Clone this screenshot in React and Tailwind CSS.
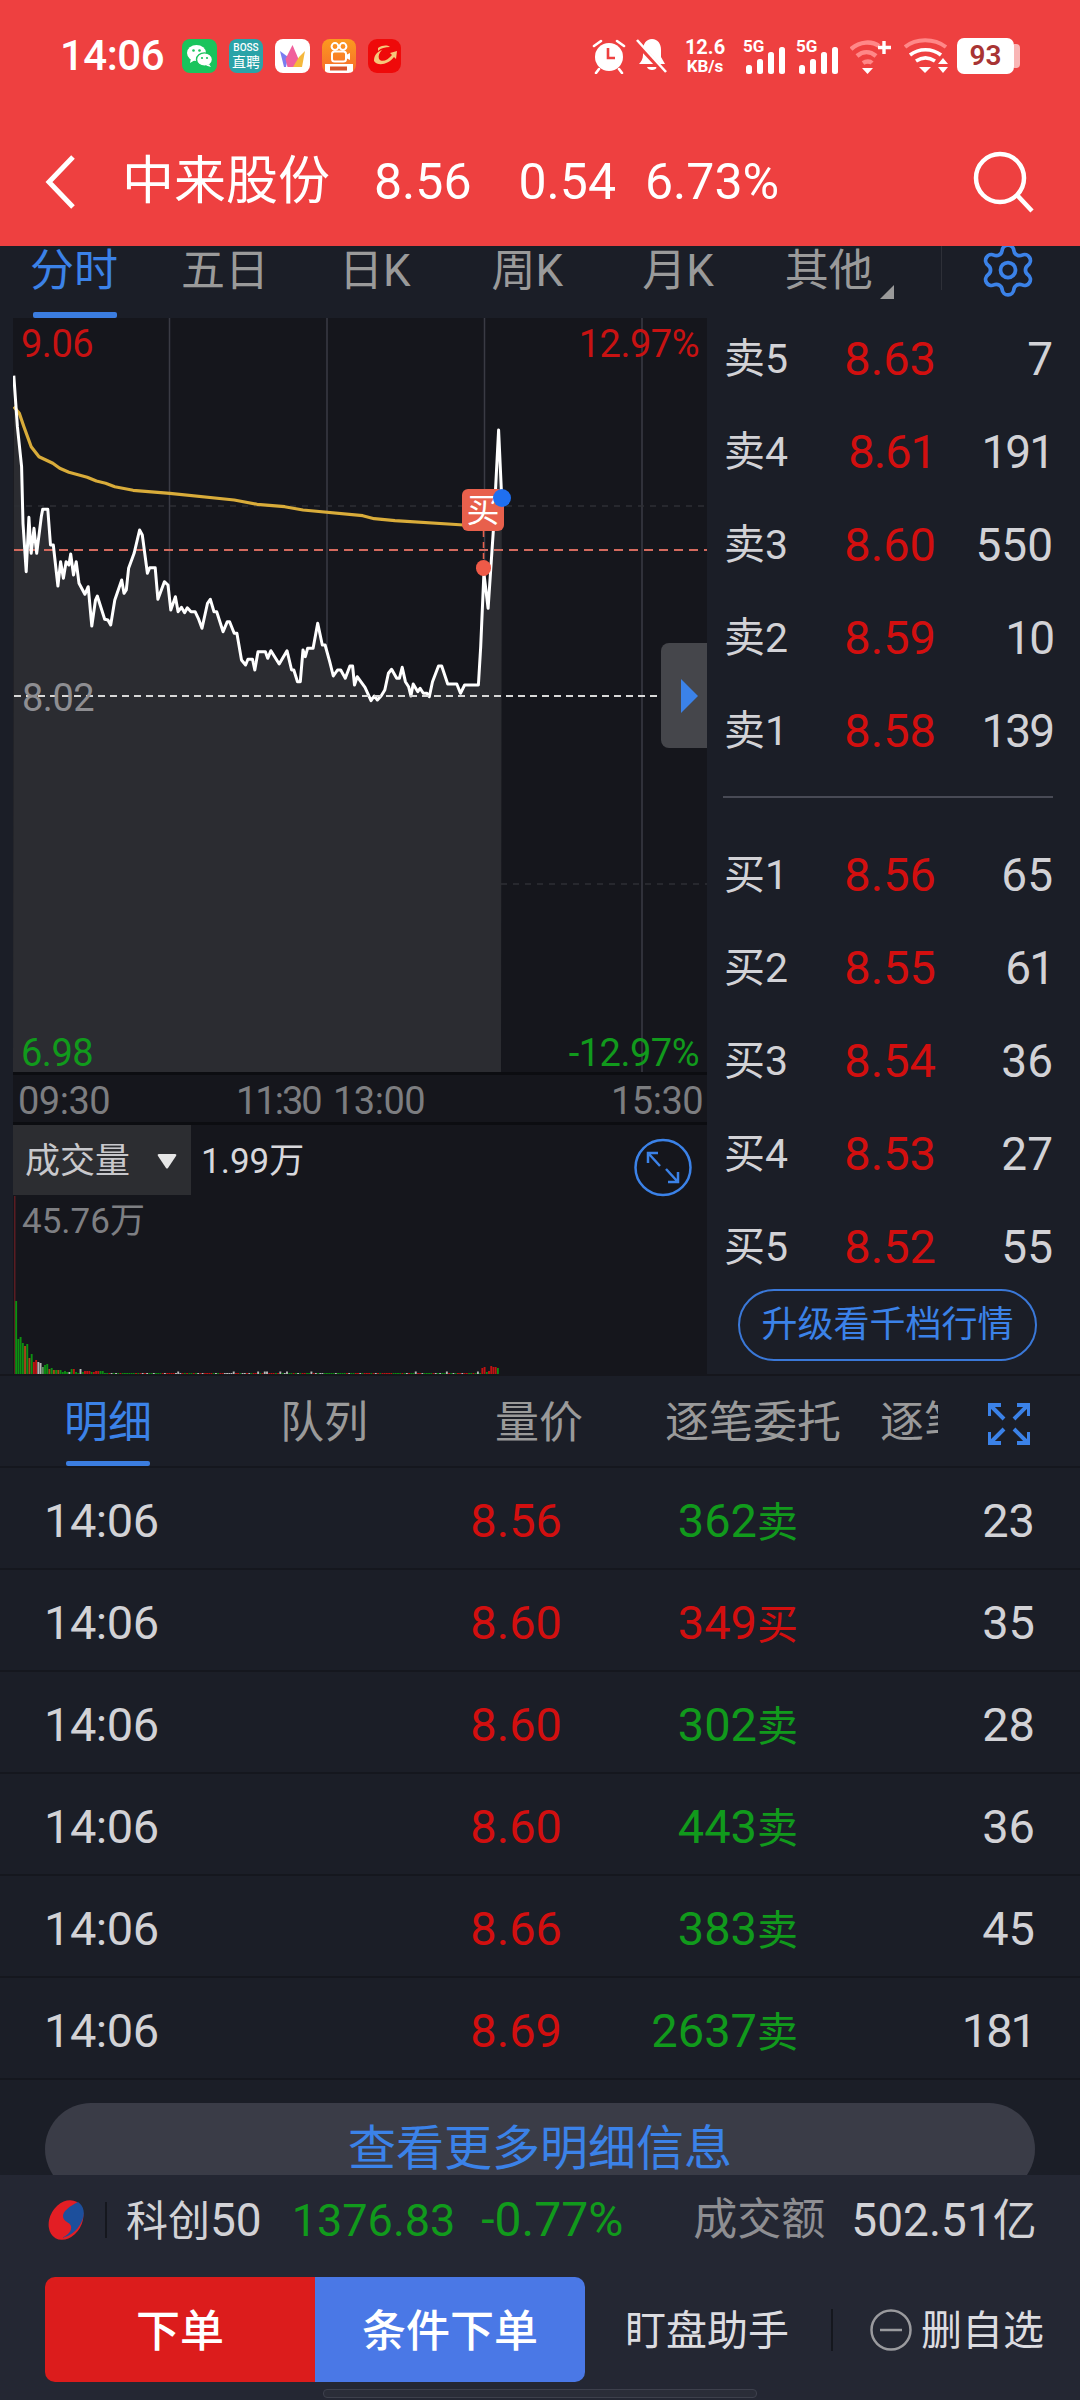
import React from "react";
import { Settings } from "lucide-react";

const PRICE = [[30,197],[38,350],[47,470],[50,640],[57,785],[63,622],[68,730],[74,655],[80,730],[90,620],[93,598],[104,598],[110,705],[116,705],[126,828],[132,755],[138,805],[144,755],[150,765],[154,732],[160,795],[166,755],[172,820],[185,853],[192,830],[200,948],[208,870],[212,858],[228,928],[235,930],[241,945],[250,870],[265,810],[270,850],[275,840],[280,775],[292,730],[304,660],[310,675],[321,790],[326,773],[338,773],[344,868],[358,815],[366,825],[372,900],[382,860],[388,905],[395,892],[402,908],[408,893],[416,905],[425,905],[432,925],[440,955],[452,880],[458,868],[466,905],[472,905],[486,965],[495,935],[500,935],[510,970],[516,970],[526,1050],[535,1065],[540,1048],[550,1048],[555,1080],[562,1025],[578,1025],[583,1045],[590,1022],[608,1062],[625,1022],[635,1080],[640,1080],[648,1115],[654,1115],[660,1020],[665,1040],[670,1015],[682,1015],[692,940],[702,1005],[708,1005],[718,1055],[726,1098],[735,1080],[742,1080],[752,1105],[762,1068],[768,1068],[772,1125],[778,1100],[795,1132],[808,1172],[815,1158],[822,1170],[830,1158],[838,1140],[846,1090],[853,1078],[864,1105],[870,1105],[876,1072],[883,1115],[890,1130],[895,1158],[900,1122],[910,1145],[915,1135],[922,1150],[930,1150],[935,1160],[942,1115],[955,1068],[962,1068],[975,1122],[995,1122],[1003,1150],[1012,1125],[1042,1125],[1047,1010],[1054,790],[1063,895],[1075,650],[1086,360],[1093,570]];
const AVERAGE = [[30,290],[42,310],[52,350],[68,410],[85,440],[115,460],[130,475],[150,487],[190,502],[210,513],[230,520],[250,530],[290,541],[370,550],[510,570],[560,583],[620,590],[660,600],[790,617],[815,626],[860,632],[1010,645]];

// Series are stored at 2.178 units per pixel across and 3 per pixel down.
const toPoints = (series) =>
  series.map(([x, y]) => `${(x / 2.178).toFixed(1)},${(310 + y / 3).toFixed(1)}`).join(" ");

const GREEN = "#0d8f12";
const RED = "#c01212";
const BROWN = "#a8461a";
const PALE = "#b8b8b8";
const SAGE = "#5f9a5f";
const EARLY_BARS = [
  [73,GREEN],[35,GREEN],[37,GREEN],[31,GREEN],[28,BROWN],[30,GREEN],[16,BROWN],[20,GREEN],[12,RED],[14,RED],[12,PALE],[11,PALE],[7,SAGE],[9,GREEN],[10,GREEN],[5,BROWN],[6,GREEN],[4,BROWN],[4,GREEN],[4,BROWN],[4,GREEN],[2,GREEN],[3,GREEN],[2,GREEN],[2,PALE],[5,GREEN],[5,RED],[2,GREEN],[1,GREEN],[5,PALE],[2,GREEN],[3,RED],[3,RED],[3,RED],[2,GREEN],[2,RED],[3,RED],[3,RED],[3,GREEN],[3,GREEN],
];
const LATE_BARS = [[6,RED],[7,RED],[2,GREEN],[3,RED],[8,RED],[7,RED],[7,RED],[6,GREEN]];
const barAt = (i) => {
  const n = Math.abs(Math.sin(i * 12.9898) * 43758.5453) % 1;
  const colour = n < 0.45 ? GREEN : n < 0.75 ? RED : PALE;
  return [n > 0.93 ? 2.5 : 1, colour];
};
const VOLUME = (() => {
  const total = 218;
  const list = [];
  for (let i = 0; i < total; i++) {
    if (i < EARLY_BARS.length) list.push(EARLY_BARS[i]);
    else if (i >= total - LATE_BARS.length) list.push(LATE_BARS[i - (total - LATE_BARS.length)]);
    else list.push(barAt(i));
  }
  return list;
})();

const ASKS = [["卖5","8.63","7"],["卖4","8.61","191"],["卖3","8.60","550"],["卖2","8.59","10"],["卖1","8.58","139"]];
const BIDS = [["买1","8.56","65"],["买2","8.55","61"],["买3","8.54","36"],["买4","8.53","27"],["买5","8.52","55"]];
const TRADES = [
  ["8.56","362","卖","23"],["8.60","349","买","35"],["8.60","302","卖","28"],
  ["8.60","443","卖","36"],["8.66","383","卖","45"],["8.69","2637","卖","181"],
];

function WeChat() {
  return (
    <div className="flex h-[34px] w-[35px] items-center justify-center rounded-[8px] bg-[#19c45c]">
      <svg viewBox="0 0 35 34" className="h-[34px] w-[35px]">
        <ellipse cx="14.5" cy="14" rx="9.5" ry="8" fill="#fff" />
        <path d="M9 19l-1 5 5-3z" fill="#fff" />
        <ellipse cx="22.5" cy="20.5" rx="8" ry="6.6" fill="#fff" stroke="#19c45c" strokeWidth="1.4" />
        <path d="M27 25l2 3-5-1.5z" fill="#fff" />
        <circle cx="11.5" cy="11.5" r="1.3" fill="#19c45c" />
        <circle cx="17.5" cy="11.5" r="1.3" fill="#19c45c" />
        <circle cx="20" cy="19" r="1.1" fill="#19c45c" />
        <circle cx="25" cy="19" r="1.1" fill="#19c45c" />
      </svg>
    </div>
  );
}

function BossApp() {
  return (
    <div className="flex h-[34px] w-[34px] flex-col items-center justify-center rounded-[8px] bg-[#2ba3a8] text-white">
      <span className="text-[10px] leading-[12px] font-medium">BOSS</span>
      <span className="text-[14px] leading-[16px]">直聘</span>
    </div>
  );
}

function Crown() {
  return (
    <div className="h-[34px] w-[35px] rounded-[8px] bg-white">
      <svg viewBox="0 0 35 34" className="h-[34px] w-[35px]">
        <path d="M5 12l8 6-2 10H9z" fill="#7b7cf0" />
        <path d="M17.5 6l6 14-3 8h-8l-2-8z" fill="#f0609c" />
        <path d="M30 12l-3 16h-9l6-10z" fill="#f5b83c" />
      </svg>
    </div>
  );
}

function Kuaishou() {
  return (
    <div className="relative h-[34px] w-[34px] overflow-hidden rounded-[8px] bg-gradient-to-b from-[#fb9a1e] to-[#f76b2a]">
      <svg viewBox="0 0 34 34" className="h-[34px] w-[34px]">
        <circle cx="13" cy="7.5" r="3.4" fill="none" stroke="#fff" strokeWidth="2" />
        <circle cx="21" cy="7.5" r="3.4" fill="none" stroke="#fff" strokeWidth="2" />
        <rect x="10" y="12.5" width="14" height="10" rx="2.5" fill="none" stroke="#fff" strokeWidth="2" />
        <path d="M24 16l4-2v7l-4-2z" fill="#fff" />
        <rect x="3" y="25" width="28" height="9" fill="#fff" />
        <rect x="8" y="27.5" width="17" height="4" fill="#d9542b" />
      </svg>
    </div>
  );
}

function SwirlApp() {
  return (
    <div className="h-[34px] w-[33px] rounded-[9px] bg-[#ef0a0a]">
      <svg viewBox="0 0 33 34" className="h-[34px] w-[33px]">
        <path d="M10 9c5-3 9-3 12-1-5 0-9 1-12 4zM6 22c0-6 3-9 8-11-3 3-4 6-3 9 3 4 9 1 13-4l-2-2 7-2-1 8-2-2c-5 7-16 10-20 4z" fill="#f6c87a" />
      </svg>
    </div>
  );
}

function Alarm() {
  return (
    <svg viewBox="0 0 36 36" className="h-[36px] w-[36px]">
      <circle cx="18" cy="19" r="14" fill="#fff" />
      <path d="M3 8l7-5M33 8l-7-5M8 31l-3 4M28 31l3 4" stroke="#fff" strokeWidth="2.6" strokeLinecap="round" />
      <path d="M17 10v10h7" fill="none" stroke="#ee4040" strokeWidth="2.6" />
    </svg>
  );
}

function BellOff() {
  return (
    <svg viewBox="0 0 32 36" className="h-[36px] w-[32px]">
      <path d="M16 1c6 0 9 5 9 11v7l4 7H3c2-2 4-5 4-9v-5C7 6 10 1 16 1z" fill="#fff" />
      <path d="M11 29c1 4 9 4 10 0z" fill="#fff" />
      <path d="M-1 3l30 32" stroke="#ee4040" strokeWidth="5" />
      <path d="M1 2l29 32" stroke="#fff" strokeWidth="2.6" />
    </svg>
  );
}

function Signal() {
  return (
    <div className="relative h-[36px] w-[43px]">
      <span className="absolute top-0 left-0 text-[17px] leading-[16px] font-bold">5G</span>
      <svg viewBox="0 0 43 36" className="h-[36px] w-[43px]">
        <rect x="3" y="27" width="6" height="9" rx="2.5" fill="#fff" />
        <rect x="14" y="21" width="6" height="15" rx="2.5" fill="#fff" />
        <rect x="25" y="14" width="6" height="22" rx="2.5" fill="#fff" />
        <rect x="36" y="9" width="6" height="27" rx="2.5" fill="#fff" />
      </svg>
    </div>
  );
}

function WifiPlus() {
  return (
    <svg viewBox="0 0 42 36" fill="none" className="h-[36px] w-[42px]">
      <path d="M1 11c9-8 21-8 28-3" stroke="#f88" strokeWidth="4.5" />
      <path d="M7 18c6-5 13-5 19 0" stroke="#f88" strokeWidth="4.5" />
      <path d="M13 25c3-2 7-2 9 0" stroke="#f88" strokeWidth="4.5" />
      <path d="M12 30h11l-5.500 6z" fill="#fff" />
      <path d="M34 3v13M28 9.500h13" stroke="#fff" strokeWidth="3.4" />
    </svg>
  );
}

function WifiDual() {
  return (
    <svg viewBox="0 0 44 36" fill="none" className="h-[36px] w-[44px]">
      <path d="M1 9c11-9 29-9 41 0" stroke="#f88" strokeWidth="4" />
      <path d="M6 17c9-7 22-7 31 0" stroke="#fff" strokeWidth="3.600" />
      <path d="M12 23c6-4 13-4 19 0" stroke="#fff" strokeWidth="3.600" />
      <path d="M15 29h12l-6 6z" fill="#fff" />
      <path d="M34 26h10l-5-6zM34 29h10l-5 6z" fill="#fff" />
    </svg>
  );
}

function Battery() {
  return (
    <div className="flex h-[36px] w-[63px] items-center">
      <div className="flex h-[36px] w-[57px] items-center justify-center rounded-[7px] bg-white text-[28px] leading-none font-semibold text-[#a83434]">
        93
      </div>
      <div className="h-[24px] w-[6px] rounded-r-[4px] bg-[#f9b5b5]" />
    </div>
  );
}

function CornerArrows() {
  return (
    <svg viewBox="0 0 42 42" fill="none" stroke="#3b82e8" strokeWidth="4" className="h-[42px] w-[42px]">
      <path d="M1 13V2h12M2 2l14 14" />
      <path d="M41 13V2H29M40 2L26 16" />
      <path d="M1 29v11h12M2 40l14-14" />
      <path d="M41 29v11H29M40 40L26 26" />
    </svg>
  );
}

// The digit 1 sits tighter than the rest in these figures.
const qtyClass = (text) => (text.includes("1") ? "tracking-[-2px]" : "");

function BookRow({ label, price, qty }) {
  return (
    <div className="grid h-[93px] grid-cols-[100px_112px_117px] items-center pl-[17px]">
      <span className="text-[41px] text-[#d2d2d6]">{label}</span>
      <span className={`text-right text-[47px] text-[#d20f0f] ${price.includes("1") ? "tracking-[-1px]" : ""}`}>{price}</span>
      <span className={`text-right text-[46px] text-[#d2d2d6] ${qtyClass(qty)}`}>{qty}</span>
    </div>
  );
}

function ChartPanel() {
  const area = `13,1072 ${toPoints(PRICE)} 501,1072`;
  return (
    <div className="relative h-[754px] w-full bg-[#15161c]">
      <svg viewBox="13 318 694 754" fill="none" className="h-[754px] w-[694px]">
        {[169.5, 327, 484.5, 642].map((x) => (
          <line key={x} x1={x} x2={x} y1="318" y2="1072" stroke="#3a3b44" strokeWidth="1.500" />
        ))}
        <polygon points={area} fill="#2b2c31" />
        <line x1="14" x2="707" y1="506" y2="506" stroke="#2e2f35" strokeWidth="1.500" strokeDasharray="6 6" />
        <line x1="501" x2="707" y1="884" y2="884" stroke="#2e2f35" strokeWidth="1.500" strokeDasharray="6 6" />
        <line x1="14" x2="707" y1="550" y2="550" stroke="#d46a5e" strokeWidth="1.800" strokeDasharray="9 6" />
        <polyline points={toPoints(AVERAGE)} stroke="#d9ac3a" strokeWidth="3.200" strokeLinejoin="round" />
        <polyline points={toPoints(PRICE)} stroke="#fff" strokeWidth="3" strokeLinejoin="round" />
        <line x1="14" x2="700" y1="696" y2="696" stroke="#d8d8d8" strokeWidth="2" strokeDasharray="7 5" />
        <line x1="483.500" x2="483.500" y1="531" y2="562" stroke="#e8604c" strokeWidth="1.500" strokeDasharray="6 5" />
      </svg>

      <span className="absolute top-[10px] left-[8px] text-[38px] leading-[32px] tracking-[-0.5px] text-[#c81212]">9.06</span>
      <span className="absolute top-[10px] right-[8px] text-[38px] leading-[32px] tracking-[-0.5px] text-[#c81212]">12.97%</span>
      <span className="absolute top-[364px] left-[9px] text-[38px] leading-[32px] tracking-[-0.5px] text-[#8e8e92]">8.02</span>
      <span className="absolute top-[719px] left-[8px] text-[38px] leading-[32px] tracking-[-0.5px] text-[#119a1c]">6.98</span>
      <span className="absolute top-[719px] right-[8px] text-[38px] leading-[32px] tracking-[-0.5px] text-[#119a1c]">-12.97%</span>

      <div className="absolute top-[171px] left-[449px] flex h-[42px] w-[42px] items-center justify-center rounded-[6px] bg-[#e8604c] text-[33px] leading-none text-white">
        买
      </div>
      <div className="absolute top-[171px] left-[480px] h-[18px] w-[18px] rounded-full bg-[#1f6ff0]" />
      <div className="absolute top-[242px] left-[463px] h-[16px] w-[15px] rounded-full bg-[#ee5a48]" />

      <div className="absolute top-[325px] right-0 flex h-[105px] w-[46px] items-center justify-end rounded-tl-[8px] rounded-bl-[8px] bg-[#45464b] pr-[9px]">
        <svg viewBox="0 0 17 34" className="h-[34px] w-[17px]">
          <path d="M0 0l17 17L0 34z" fill="#3b82e8" />
        </svg>
      </div>
    </div>
  );
}

function VolumePanel() {
  return (
    <div className="relative h-[249px] w-full overflow-hidden bg-[#15161c]">
      <div className="flex h-[70px] items-center">
        <div className="flex h-[70px] w-[178px] items-center bg-[#2c2d31] pt-[2px] pl-[12px]">
          <span className="text-[35px] leading-none text-[#c8c8cc]">成交量</span>
          <svg viewBox="0 0 20 16" className="ml-[27px] h-[16px] w-[20px]">
            <path d="M2 1h16q2 0 1 2L11 15q-1 1-2 0L1 3Q0 1 2 1z" fill="#e6e6e6" />
          </svg>
        </div>
        <span className="ml-[10px] pt-[2px] text-[35px] leading-none text-[#d8d8dc]">1.99万</span>
      </div>
      <span className="absolute top-[79px] left-[9px] text-[35px] leading-[36px] text-[#7e7f83]">45.76万</span>
      <div className="absolute top-[13px] right-[15px] h-[59px] w-[58px]">
        <svg viewBox="0 0 58 59" fill="none" stroke="#3b82e8" className="h-[59px] w-[58px]">
          <circle cx="29" cy="29.500" r="27.500" strokeWidth="2.500" />
          <path d="M14 25V15h10M15 16l11 12M44 34v10H34M43 43L32 31" strokeWidth="2.500" />
        </svg>
      </div>
      <svg viewBox="0 0 488 178" className="absolute bottom-0 left-0 h-[178px] w-[488px]">
        <rect x="1" y="0" width="1.500" height="178" fill="#5a1c22" />
        {VOLUME.map(([h, colour], i) => (
          <rect key={i} x={2.200 + i * 2.220} y={178 - h} width="1.900" height={h} fill={colour} />
        ))}
      </svg>
    </div>
  );
}

function ExchangeLogo() {
  return (
    <svg viewBox="0 0 42 40" className="h-[40px] w-[42px]">
      <ellipse cx="21" cy="20" rx="16" ry="21" transform="rotate(30 21 20)" fill="#e31e24" />
      <path d="M33 2c6 4 8 12 3 21-4 8-11 13-19 15 6-3 10-7 9-12-1-4-8-4-8-10 0-5 7-10 15-14z" fill="#1c4f9c" />
    </svg>
  );
}

export default function App() {
  return (
    <div className="flex h-[2400px] w-[1080px] flex-col overflow-hidden bg-[#1b1e27] [font-family:Roboto,'Noto_Sans_CJK_SC',sans-serif]">
      <header className="h-[246px] shrink-0 bg-[#ee4040] text-white">
        <div className="flex h-[112px] items-center pr-[60px] pl-[60px]">
          <span className="w-[105px] text-[42px] leading-none font-medium tracking-[-0.5px]">14:06</span>
          <div className="ml-[17px] flex items-center gap-[12px]">
            <WeChat />
            <BossApp />
            <Crown />
            <Kuaishou />
            <SwirlApp />
          </div>
          <div className="ml-auto flex items-center">
            <Alarm />
            <div className="ml-[9px]"><BellOff /></div>
            <div className="ml-[15px] flex w-[44px] flex-col items-center font-bold">
              <span className="text-[20px] leading-[19px]">12.6</span>
              <span className="text-[17px] leading-[18px]">KB/s</span>
            </div>
            <div className="ml-[16px]"><Signal /></div>
            <div className="ml-[10px]"><Signal /></div>
            <div className="ml-[11px]"><WifiPlus /></div>
            <div className="ml-[12px]"><WifiDual /></div>
            <div className="ml-[9px]"><Battery /></div>
          </div>
        </div>
        <div className="flex h-[140px] items-center pr-[45px] pl-[45px]">
          <svg viewBox="0 0 30 54" fill="none" stroke="#fff" strokeWidth="5" className="h-[54px] w-[30px]">
            <path d="M28 2L4 27l24 25" />
          </svg>
          <span className="ml-[47px] text-[52px] leading-none">中来股份</span>
          <span className="ml-[44px] text-[50px] leading-none">8.56</span>
          <span className="ml-[47px] text-[50px] leading-none">0.54</span>
          <span className="ml-[29px] text-[50px] leading-none">6.73%</span>
          <svg viewBox="0 0 62 62" fill="none" stroke="#fff" strokeWidth="4.500" className="ml-auto h-[62px] w-[62px]">
            <circle cx="27" cy="27" r="24" />
            <path d="M44 44l15 16" />
          </svg>
        </div>
      </header>

      <nav className="relative flex h-[72px] shrink-0 overflow-hidden pl-[30px] text-[44px] leading-[50px] text-[#9a9a9a]">
        <span className="relative text-[#3b82e8]">
          分时
          <span className="absolute top-[66px] left-[3px] h-[6px] w-[84px] rounded-[2px] bg-[#3b7de0]" />
        </span>
        <span className="ml-[63px]">五日</span>
        <span className="ml-[70px]">日K</span>
        <span className="ml-[81px]">周K</span>
        <span className="ml-[79px]">月K</span>
        <span className="ml-[71px]">其他</span>
        <svg viewBox="0 0 14 14" className="mt-[39px] ml-[7px] h-[14px] w-[14px]">
          <path d="M14 0v14H0z" fill="#9a9a9a" />
        </svg>
        <div className="ml-[47px] h-[44px] w-px bg-[#2e3038]" />
        <Settings className="-mt-[6px] ml-[36px] h-[60px] w-[60px] shrink-0 text-[#3b82e8]" strokeWidth={1.5} />
      </nav>

      <section className="flex h-[1058px] shrink-0 border-b-2 border-[#15161c]">
        <div className="ml-[13px] flex w-[694px] flex-col gap-[3px] bg-[#0c0d11]">
          <ChartPanel />
          <div className="relative flex h-[47px] shrink-0 items-center bg-[#15161c] pt-[5px] text-[38px] leading-none tracking-[-0.5px] text-[#7c7d80]">
            <span className="absolute left-[5px]">09:30</span>
            <span className="absolute left-[223px] tracking-[-2px]">11:30</span>
            <span className="absolute left-[320px]">13:00</span>
            <span className="absolute left-[598px]">15:30</span>
          </div>
          <VolumePanel />
        </div>
        <div className="-mt-[5px] flex w-[373px] flex-col">
          {ASKS.map(([label, price, qty]) => (
            <BookRow key={label} label={label} price={price} qty={qty} />
          ))}
          <div className="mt-[18px] mr-[27px] ml-[16px] h-[2px] bg-[#484a55]" />
          <div className="mt-[31px]">
            {BIDS.map(([label, price, qty]) => (
              <BookRow key={label} label={label} price={price} qty={qty} />
            ))}
          </div>
          <div className="-mt-[5px] ml-[31px] flex h-[72px] w-[299px] items-center justify-center rounded-full border-2 border-[#3a78d8] text-[36px] leading-none text-[#3b82e8]">
            升级看千档行情
          </div>
        </div>
      </section>

      <div className="flex h-[90px] shrink-0 text-[44px] leading-[94px] text-[#9a9a9a]">
        <span className="relative ml-[64px] text-[#3b82e8]">
          明细
          <span className="absolute bottom-0 left-[2px] h-[5px] w-[84px] rounded-[2px] bg-[#3b7de0]" />
        </span>
        <span className="ml-[128px]">队列</span>
        <span className="ml-[127px]">量价</span>
        <span className="ml-[82px]">逐笔委托</span>
        <span className="ml-[39px] h-[90px] w-[58px] overflow-hidden whitespace-nowrap">逐笔成交</span>
        <div className="mt-[27px] ml-[50px]"><CornerArrows /></div>
      </div>

      <div className="min-h-0 flex-1 overflow-hidden">
        {TRADES.map(([price, vol, side, qty], i) => (
          <div
            key={i}
            className="grid h-[102px] grid-cols-[300px_218px_236px_237px] items-center border-t-2 border-[#15171e] pt-[4px] pl-[44px] text-[47px] leading-none"
          >
            <span className="tracking-[-0.5px] text-[#d2d2d6]">14:06</span>
            <span className="text-right text-[#d20f0f]">{price}</span>
            <span className={side === "买" ? "text-right text-[#d20f0f]" : "text-right text-[#119a1c]"}>
              {vol}
              <span className="text-[41px]">{side}</span>
            </span>
            <span className={`text-right text-[#d2d2d6] ${qtyClass(qty)}`}>{qty}</span>
          </div>
        ))}
        <div className="border-t-2 border-[#15171e] px-[45px] pt-[23px]">
          <div className="flex h-[92px] items-center justify-center rounded-[46px] bg-[#3a3c47] text-[48px] leading-none text-[#3b82e8]">
            查看更多明细信息
          </div>
        </div>
      </div>

      <footer className="h-[225px] shrink-0 bg-[#242733]">
        <div className="flex h-[90px] items-center pl-[45px]">
          <ExchangeLogo />
          <div className="ml-[18px] h-[36px] w-[2px] bg-[#15171e]" />
          <span className="ml-[19px] text-[42px] leading-none text-[#d2d2d6]">
            科创<span className="text-[46px]">50</span>
          </span>
          <span className="ml-[30px] text-[45px] leading-none text-[#119a1c]">1376.83</span>
          <span className="ml-[26px] text-[48px] leading-none text-[#119a1c]">-0.77%</span>
          <span className="ml-[70px] text-[44px] leading-none text-[#8e8e92]">成交额</span>
          <span className="ml-[26px] text-[46px] leading-none text-[#d2d2d6]">
            502.51<span className="text-[44px]">亿</span>
          </span>
        </div>
        <div className="mt-[12px] flex h-[105px] items-center pl-[45px]">
          <div className="flex h-[105px] w-[270px] items-center justify-center rounded-l-[10px] bg-[#dc1c1c] pt-[4px] text-[44px] leading-none font-medium text-white">
            下单
          </div>
          <div className="flex h-[105px] w-[270px] items-center justify-center rounded-r-[10px] bg-[#4a78e6] pt-[4px] text-[44px] leading-none font-medium text-white">
            条件下单
          </div>
          <span className="ml-[40px] pt-[3px] text-[41px] leading-none text-[#dcdce0]">盯盘助手</span>
          <div className="ml-[42px] h-[42px] w-[2px] bg-[#15171e]" />
          <svg viewBox="0 0 42 42" fill="none" stroke="#9a9a9e" strokeWidth="2.500" className="ml-[37px] h-[42px] w-[42px]">
            <circle cx="21" cy="21" r="19.500" />
            <path d="M10 21h22" />
          </svg>
          <span className="ml-[9px] pt-[3px] text-[41px] leading-none text-[#dcdce0]">删自选</span>
        </div>
        <div className="mx-auto mt-[7px] h-[9px] w-[434px] rounded-[4px] border border-[#3d404c] bg-[#2a2d38]" />
      </footer>
    </div>
  );
}
